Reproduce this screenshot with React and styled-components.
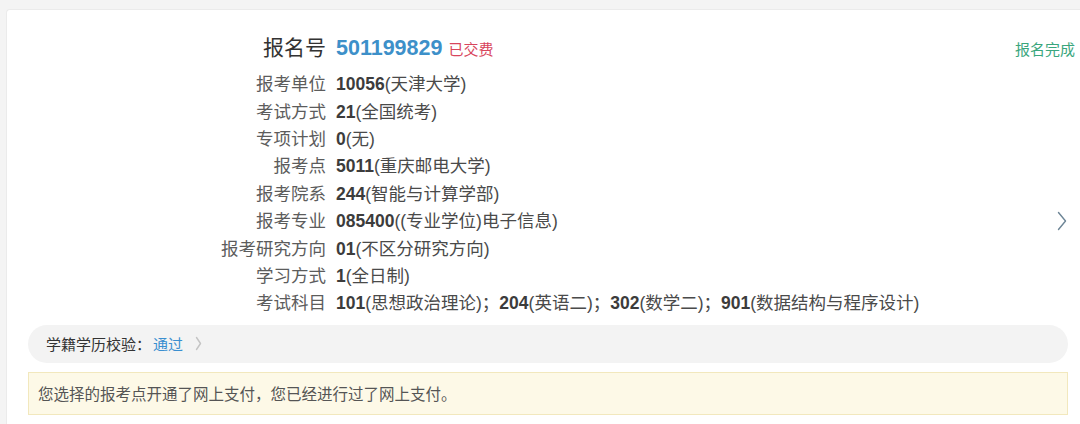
import React from 'react';
import styled, { createGlobalStyle } from 'styled-components';

const GlobalStyle = createGlobalStyle`
    html, body {
        margin: 0;
        padding: 0;
        background: #f4f4f4;
        overflow: hidden;
    }
    body {
        font-family: "Liberation Sans", "Noto Sans CJK SC", sans-serif;
        color: #444;
    }
`

const Page = styled.div`
    padding: 9px 0 0 6px;
    height: 424px;
    box-sizing: border-box;
`
const Card = styled.div`
    background: #fff;
    border: 1px solid #ebebeb;
    border-right: none;
    border-bottom: none;
    border-radius: 4px 0 0 0;
    padding: 23px 12px 40px 21px;
    min-height: 460px;
`
const Header = styled.div`
    display: grid;
    grid-template-columns: 298px 1fr auto;
    column-gap: 10px;
    align-items: center;
    height: 30px;
    margin-bottom: 6px;
    margin-right: -7px;
`
const TitleLabel = styled.div`
    text-align: right;
    font-size: 21px;
    color: #333;
    line-height: 30px;
`
const TitleValue = styled.div`
    display: flex;
    align-items: baseline;
    gap: 6px;
`
const RegNumber = styled.span`
    font-size: 21.5px;
    font-weight: bold;
    color: #3d90c9;
`
const Paid = styled.span`
    font-size: 15px;
    color: #d8455c;
`
const Status = styled.div`
    font-size: 15px;
    color: #3aa67d;
`
const Body = styled.div`
    display: flex;
`
const Rows = styled.div`
    flex: 1;
    display: grid;
    grid-template-columns: 298px 1fr;
    column-gap: 10px;
    grid-auto-rows: 27.4px;
    align-items: center;
`
const Label = styled.div`
    text-align: right;
    font-size: 17.5px;
    color: #5c5c5c;
    white-space: nowrap;
`
const Value = styled.div`
    font-size: 17.5px;
    color: #4a4a4a;
    white-space: nowrap;
    b {
        color: #3c3c3c;
    }
`
const ChevronCell = styled.div`
    width: 16px;
    display: flex;
    justify-content: flex-end;
    padding-top: 142px;
    padding-right: 1px;
`
const CheckBar = styled.div`
    display: flex;
    align-items: center;
    margin-top: 9px;
    height: 38px;
    border-radius: 19px;
    background: #f3f3f3;
    padding-left: 18px;
    font-size: 15px;
    color: #333;
`
const PassLink = styled.span`
    color: #3a8fd0;
    margin: 0 12px 0 2px;
`
const Notice = styled.div`
    margin-top: 9px;
    height: 43px;
    box-sizing: border-box;
    display: flex;
    align-items: center;
    padding-left: 9px;
    background: #fdf9e7;
    border: 1px solid #f2e8bd;
    font-size: 15.5px;
    color: #555;
`

const Chevron = ({ color, w, h }) => (
    <svg width={w} height={h} viewBox={`0 0 ${w} ${h}`} fill="none">
        <path d={`M1.5 1.5 L${w - 1.5} ${h / 2} L1.5 ${h - 1.5}`} stroke={color} strokeWidth="1.4" strokeLinecap="round" strokeLinejoin="round" />
    </svg>
)

const rows = [
    ['报考单位', [['10056', '(天津大学)']]],
    ['考试方式', [['21', '(全国统考)']]],
    ['专项计划', [['0', '(无)']]],
    ['报考点', [['5011', '(重庆邮电大学)']]],
    ['报考院系', [['244', '(智能与计算学部)']]],
    ['报考专业', [['085400', '((专业学位)电子信息)']]],
    ['报考研究方向', [['01', '(不区分研究方向)']]],
    ['学习方式', [['1', '(全日制)']]],
    ['考试科目', [['101', '(思想政治理论)；'], ['204', '(英语二)；'], ['302', '(数学二)；'], ['901', '(数据结构与程序设计)']]],
]

const App = () => {
    return (
        <Page>
            <GlobalStyle />
            <Card>
                <Header>
                    <TitleLabel>报名号</TitleLabel>
                    <TitleValue>
                        <RegNumber>501199829</RegNumber>
                        <Paid>已交费</Paid>
                    </TitleValue>
                    <Status>报名完成</Status>
                </Header>
                <Body>
                    <Rows>
                        {rows.map(([label, parts]) => (
                            <React.Fragment key={label}>
                                <Label>{label}</Label>
                                <Value>
                                    {parts.map(([code, text]) => (
                                        <React.Fragment key={code}>
                                            <b>{code}</b>{text}
                                        </React.Fragment>
                                    ))}
                                </Value>
                            </React.Fragment>
                        ))}
                    </Rows>
                    <ChevronCell>
                        <Chevron color="#6d8596" w={10} h={20} />
                    </ChevronCell>
                </Body>
                <CheckBar>
                    <span>学籍学历校验：</span>
                    <PassLink>通过</PassLink>
                    <Chevron color="#c4c4c4" w={7} h={15} />
                </CheckBar>
                <Notice>您选择的报考点开通了网上支付，您已经进行过了网上支付。</Notice>
            </Card>
        </Page>
    )
}

export default App
